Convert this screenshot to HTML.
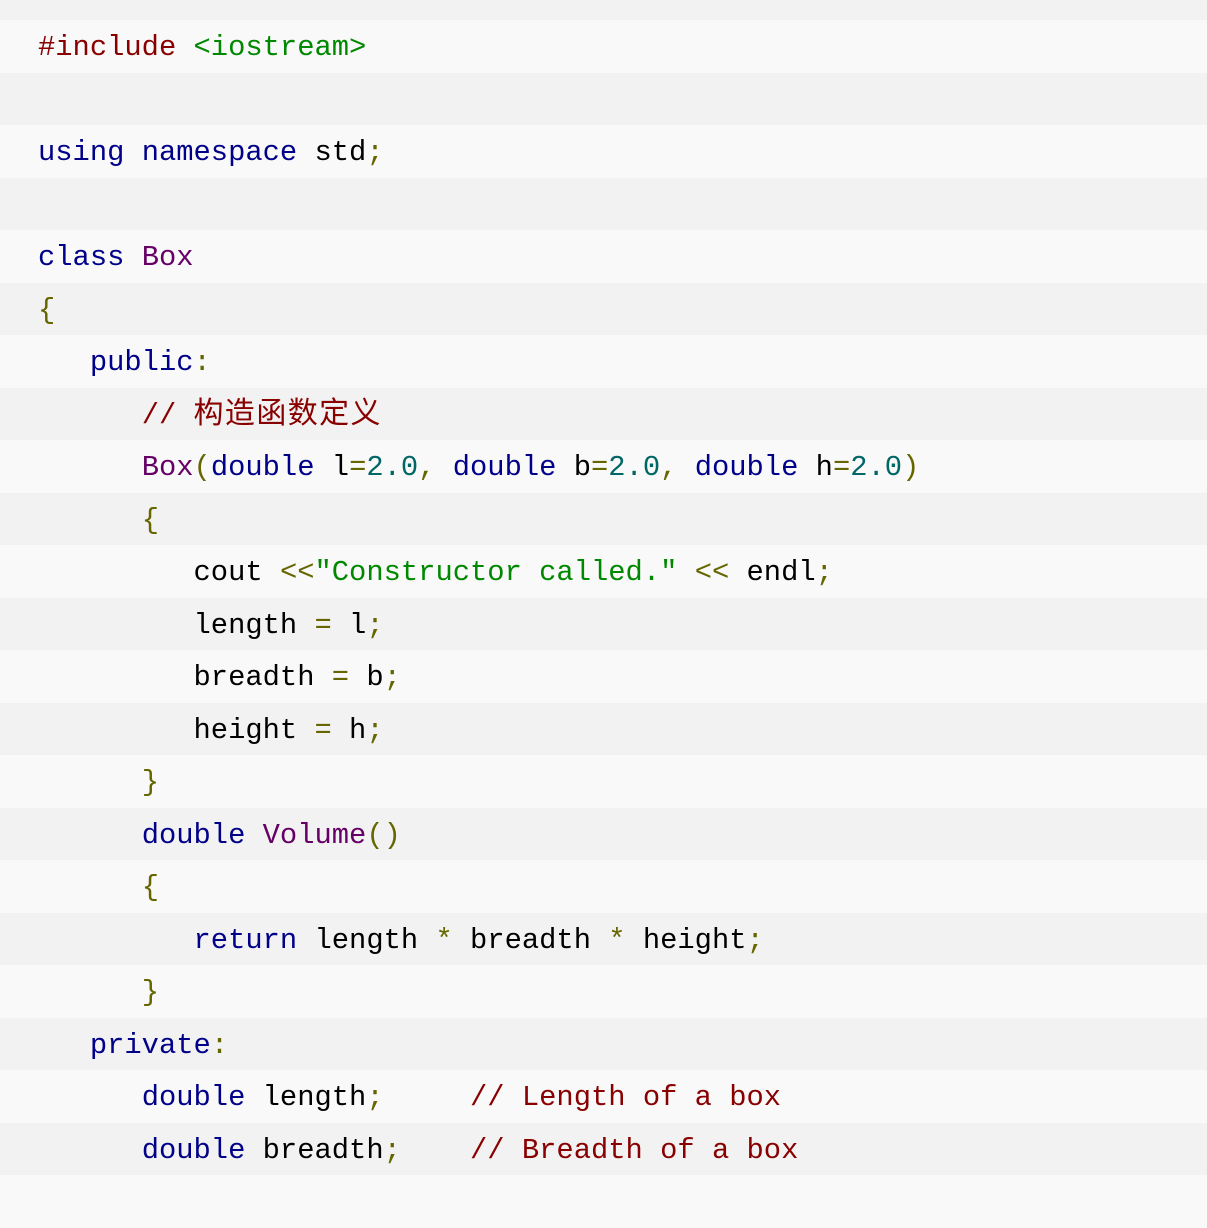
<!DOCTYPE html>
<html><head><meta charset="utf-8"><style>
html,body{margin:0;padding:0;background:#f2f2f2;width:1207px;height:1185px;overflow:hidden}
.c{position:absolute;top:20px;left:0;width:1207px}
.l{height:52.5px;line-height:56px;padding-left:38px;white-space:pre;font-family:"Liberation Mono","Noto Sans CJK SC",monospace;font-size:28.8px;color:#000;box-sizing:border-box;overflow:hidden}
.l:nth-child(odd){background:#f9f9f9}
.l:nth-child(even){background:#f2f2f2}
.k{color:#000088}.p{color:#666600}.t{color:#660066}.s{color:#008800}.n{color:#006666}.m{color:#880000}
.cj{font-size:30px;letter-spacing:1.4px}
</style></head><body><div class="c">
<div class="l"><span class="m">#include</span> <span class="s">&lt;iostream&gt;</span></div>
<div class="l"> </div>
<div class="l"><span class="k">using</span> <span class="k">namespace</span> std<span class="p">;</span></div>
<div class="l"> </div>
<div class="l"><span class="k">class</span> <span class="t">Box</span></div>
<div class="l"><span class="p">{</span></div>
<div class="l">   <span class="k">public</span><span class="p">:</span></div>
<div class="l">      <span class="m">// <span class="cj">构造函数定义</span></span></div>
<div class="l">      <span class="t">Box</span><span class="p">(</span><span class="k">double</span> l<span class="p">=</span><span class="n">2.0</span><span class="p">,</span> <span class="k">double</span> b<span class="p">=</span><span class="n">2.0</span><span class="p">,</span> <span class="k">double</span> h<span class="p">=</span><span class="n">2.0</span><span class="p">)</span></div>
<div class="l">      <span class="p">{</span></div>
<div class="l">         cout <span class="p">&lt;&lt;</span><span class="s">"Constructor called."</span> <span class="p">&lt;&lt;</span> endl<span class="p">;</span></div>
<div class="l">         length <span class="p">=</span> l<span class="p">;</span></div>
<div class="l">         breadth <span class="p">=</span> b<span class="p">;</span></div>
<div class="l">         height <span class="p">=</span> h<span class="p">;</span></div>
<div class="l">      <span class="p">}</span></div>
<div class="l">      <span class="k">double</span> <span class="t">Volume</span><span class="p">()</span></div>
<div class="l">      <span class="p">{</span></div>
<div class="l">         <span class="k">return</span> length <span class="p">*</span> breadth <span class="p">*</span> height<span class="p">;</span></div>
<div class="l">      <span class="p">}</span></div>
<div class="l">   <span class="k">private</span><span class="p">:</span></div>
<div class="l">      <span class="k">double</span> length<span class="p">;</span>     <span class="m">// Length of a box</span></div>
<div class="l">      <span class="k">double</span> breadth<span class="p">;</span>    <span class="m">// Breadth of a box</span></div>
<div class="l"> </div>
</div></body></html>
